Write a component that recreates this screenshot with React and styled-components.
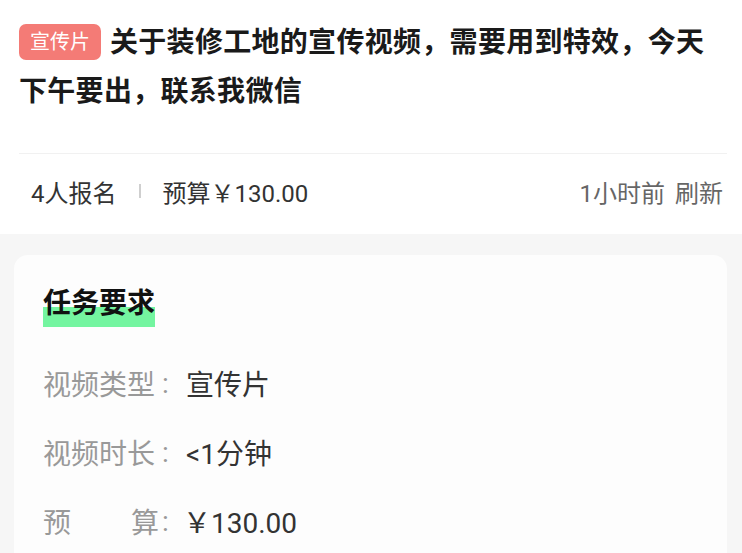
import styled, { createGlobalStyle } from "styled-components";

const GlobalStyle = createGlobalStyle`
  html, body {
    margin: 0;
    padding: 0;
    background: #f6f6f6;
    font-family: "Roboto", "Noto Sans CJK SC", sans-serif;
  }
`;

const Page = styled.div`
  width: 742px;
  height: 553px;
  overflow: hidden;
  background: #f6f6f6;
`;

const Header = styled.section`
  background: #fff;
  padding: 18px 15px 0 19px;
`;

const Title = styled.h1`
  margin: 0;
  font-size: 28px;
  line-height: 49px;
  font-weight: 700;
  color: #1a1a1a;
  letter-spacing: 0.3px;
`;

const Tag = styled.span`
  float: left;
  display: flex;
  align-items: center;
  justify-content: center;
  height: 36px;
  margin: 6px 9px 0 0;
  padding: 0 11px;
  border-radius: 7px;
  background: #f47b76;
  color: #fff;
  font-size: 20px;
  font-weight: 400;
  line-height: 36px;
  letter-spacing: 0;
`;

const MetaRow = styled.div`
  display: flex;
  align-items: center;
  height: 81px;
  margin-top: 37px;
  border-top: 1px solid #f1f1f1;
  font-size: 24px;
  color: #333;
  padding: 0 4px 6px 12px;
  box-sizing: border-box;
`;

const Divider = styled.span`
  width: 2px;
  height: 14px;
  background: #cfcfcf;
  margin: 0 22px;
`;

const Right = styled.span`
  margin-left: auto;
  color: #666;
  word-spacing: 4px;
`;

const Card = styled.section`
  margin: 21px 15px 0 14px;
  background: #fdfdfd;
  border-radius: 14px;
  padding: 29px 29px 0 29px;
  height: 400px;
`;

const CardTitle = styled.h2`
  position: relative;
  display: inline-block;
  margin: 0;
  font-size: 28px;
  line-height: 40px;
  font-weight: 700;
  color: #111;
  z-index: 0;

  &::after {
    content: "";
    position: absolute;
    left: 0;
    right: 0;
    top: 23px;
    height: 20px;
    background: #74f5a0;
    z-index: -1;
  }
`;

const InfoList = styled.div`
  display: flex;
  flex-direction: column;
  gap: 29px;
  margin-top: 39px;
`;

const InfoRow = styled.div`
  display: flex;
  align-items: center;
  height: 40px;
  font-size: 28px;
`;

const Label = styled.span`
  width: 116px;
  display: flex;
  justify-content: space-between;
  color: #999;
`;

const Colon = styled.span`
  width: 24px;
  padding-left: 3px;
  color: #999;
`;

const Value = styled.span`
  color: #333;
  margin-left: ${(p) => (p.$shift ? "-3px" : "0")};
`;

const rows = [
  { label: ["视频类型"], value: "宣传片" },
  { label: ["视频时长"], value: "<1分钟" },
  { label: ["预", "算"], value: "￥130.00", shift: true },
];

export default function App() {
  return (
    <Page>
      <GlobalStyle />
      <Header>
        <Title>
          <Tag>宣传片</Tag>
          关于装修工地的宣传视频，需要用到特效，今天下午要出，联系我微信
        </Title>
        <MetaRow>
          <span>4人报名</span>
          <Divider />
          <span>预算￥130.00</span>
          <Right>1小时前 刷新</Right>
        </MetaRow>
      </Header>
      <Card>
        <CardTitle>任务要求</CardTitle>
        <InfoList>
          {rows.map((r) => (
            <InfoRow key={r.value}>
              <Label>
                {r.label.map((l) => (
                  <span key={l}>{l}</span>
                ))}
              </Label>
              <Colon>:</Colon>
              <Value $shift={r.shift}>{r.value}</Value>
            </InfoRow>
          ))}
        </InfoList>
      </Card>
    </Page>
  );
}
